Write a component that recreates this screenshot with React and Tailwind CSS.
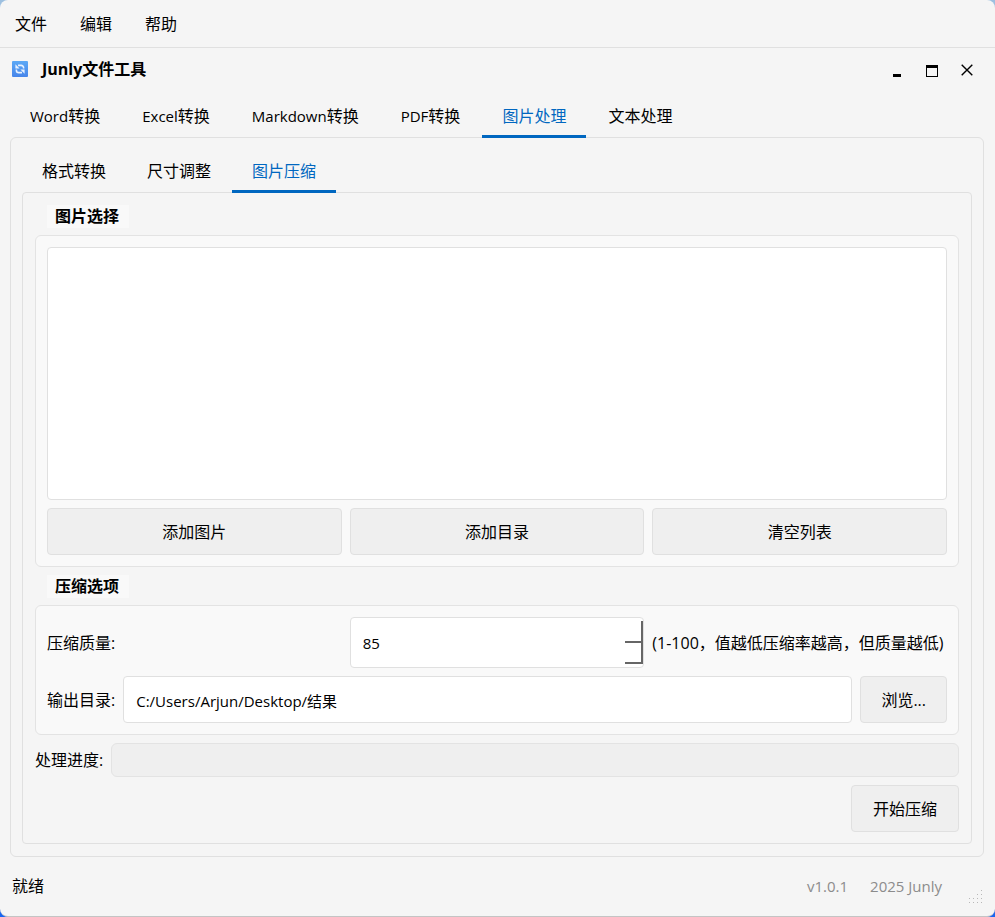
import { useState } from "react";

const mainTabs = [
  { latin: "Word", label: "转换" },
  { latin: "Excel", label: "转换" },
  { latin: "Markdown", label: "转换" },
  { latin: "PDF", label: "转换" },
  { latin: "", label: "图片处理" },
  { latin: "", label: "文本处理" },
];

const imageTabs = [
  { latin: "", label: "格式转换" },
  { latin: "", label: "尺寸调整" },
  { latin: "", label: "图片压缩" },
];

function TabBar({ tabs, active, onSelect, name, gap }) {
  return (
    <div role="tablist" aria-label={name} className={"relative z-10 -mb-px flex " + gap}>
      {tabs.map((tab, index) => (
        <button
          key={tab.latin + tab.label}
          type="button"
          role="tab"
          aria-selected={index === active}
          onClick={() => onSelect(index)}
          className={
            index === active
              ? "h-11 border-b-3 border-[#0067c0] px-5 pt-0.5 text-[#0067c0]"
              : "h-11 border-b-3 border-transparent px-5 pt-0.5"
          }
        >
          {tab.latin && <span className="text-[15px]">{tab.latin}</span>}
          {tab.label}
        </button>
      ))}
    </div>
  );
}

function PushButton({ children, className }) {
  return (
    <button type="button" className={"h-[47px] rounded border border-[#e0e0e0] bg-[#efefef] " + className}>
      {children}
    </button>
  );
}

function Group({ title, grow, children }) {
  return (
    <section className={grow ? "flex grow flex-col items-stretch" : "flex flex-col items-stretch"}>
      <h2 className="ml-3 self-start bg-[#f9f9f9] pr-2.5 pl-2 leading-[23px] font-bold">{title}</h2>
      <div className="mt-[7px] flex grow flex-col gap-2 rounded-md border border-[#e3e3e3] bg-[#f9f9f9] p-[11px]">
        {children}
      </div>
    </section>
  );
}

function AppIcon() {
  return (
    <svg width="16" height="16" viewBox="0 0 16 16" aria-hidden="true">
      <defs>
        <linearGradient id="icon-fill" x1="0" y1="0" x2="0" y2="1">
          <stop offset="0" stopColor="#5ca9f6" />
          <stop offset="1" stopColor="#4685ea" />
        </linearGradient>
      </defs>
      <rect width="16" height="16" rx="1" fill="url(#icon-fill)" />
      <g fill="none" stroke="#e6f1ff" strokeWidth="1.6">
        <path d="M6 4.4h3.2a2.4 2.4 0 0 1 2.4 2.4v.8" />
        <path d="M10 11.6H6.8a2.4 2.4 0 0 1-2.4-2.4v-.8" />
      </g>
      <path d="M3.4 3.2v4.2h4.2zM12.6 12.8V8.6H8.4z" fill="#e6f1ff" />
    </svg>
  );
}

const gripDots = [
  [12, 0], [8, 4], [12, 4], [4, 8], [8, 8], [12, 8], [0, 8], [0, 12], [4, 12], [8, 12], [12, 12],
];

export default function App() {
  const [mainTab, setMainTab] = useState(4);
  const [imageTab, setImageTab] = useState(2);
  const [quality, setQuality] = useState(85);
  const [folder, setFolder] = useState("C:/Users/Arjun/Desktop/结果");

  return (
    <div className="min-h-screen bg-linear-to-b from-[#9dc0e0] to-[#1a66f0]">
      <div className="flex min-h-screen flex-col rounded-lg border-b border-[#c4c4c4] bg-[#f5f5f5] font-['Open_Sans','Noto_Sans_CJK_SC',sans-serif] text-base leading-6 text-black">
        <nav className="flex h-12 items-center gap-[3px] border-b border-[#e0e0e0]">
          <button type="button" className="px-[15px]">文件</button>
          <button type="button" className="px-[15px]">编辑</button>
          <button type="button" className="px-[15px]">帮助</button>
        </nav>

        <header className="mb-1 flex h-[42px] items-center pr-[11px] pl-3">
          <AppIcon />
          <h1 className="ml-3.5 grow font-bold">Junly文件工具</h1>
          <button type="button" aria-label="最小化" className="flex h-8 w-[35px] items-center justify-center">
            <svg width="12" height="18" viewBox="0 -4 12 18"><path d="M2 10h8v3H2z" /></svg>
          </button>
          <button type="button" aria-label="最大化" className="flex h-8 w-[35px] items-center justify-center">
            <svg width="12" height="18" viewBox="0 -4 12 18"><path fillRule="evenodd" d="M0 1h12v12H0zM1 4v8h10V4z" /></svg>
          </button>
          <button type="button" aria-label="关闭" className="flex h-8 w-[35px] items-center justify-center">
            <svg width="12" height="18" viewBox="0 -4 12 18" fill="none" stroke="#000" strokeWidth="1.4"><path d="M.7.7l10.6 10.6M11.3.7L.7 11.3" /></svg>
          </button>
        </header>

        <main className="mr-[11px] ml-[10px] flex grow flex-col">
          <TabBar tabs={mainTabs} active={mainTab} onSelect={setMainTab} name="工具" gap="gap-0.5" />
          <div className="flex grow flex-col rounded-md border border-[#e0e0e0] p-[11px] pb-3">
            <TabBar tabs={imageTabs} active={imageTab} onSelect={setImageTab} name="图片处理" gap="gap-px" />
            <div className="flex grow flex-col gap-2 rounded border border-[#e0e0e0] px-3 pt-3 pb-[11px]">
              <Group title="图片选择" grow>
                <ul aria-label="图片列表" className="min-h-40 grow rounded border border-[#e0e0e0] bg-white" />
                <div className="grid grid-cols-3 gap-2">
                  <PushButton className="px-5">添加图片</PushButton>
                  <PushButton className="px-5">添加目录</PushButton>
                  <PushButton className="px-5">清空列表</PushButton>
                </div>
              </Group>

              <Group title="压缩选项">
                <div className="grid grid-cols-3 items-center gap-2">
                  <label htmlFor="quality">压缩质量:</label>
                  <div className="flex h-[51px] items-center rounded border border-[#e0e0e0] bg-white">
                    <input
                      id="quality"
                      inputMode="numeric"
                      value={quality}
                      onChange={(event) => setQuality(Number(event.target.value) || 0)}
                      className="h-full min-w-0 grow px-3 text-[15px] outline-none"
                    />
                    <div className="flex h-[43px] w-[18px] flex-col">
                      <button
                        type="button"
                        aria-label="增加"
                        onClick={() => setQuality(Math.min(100, quality + 1))}
                        className="grow border-r-2 border-b-2 border-[#666666]"
                      />
                      <button
                        type="button"
                        aria-label="减少"
                        onClick={() => setQuality(Math.max(1, quality - 1))}
                        className="grow border-r-2 border-b-2 border-[#666666]"
                      />
                    </div>
                  </div>
                  <span className="whitespace-nowrap">(1-100，值越低压缩率越高，但质量越低)</span>
                </div>
                <div className="flex items-center gap-2">
                  <label htmlFor="folder">输出目录:</label>
                  <input
                    id="folder"
                    value={folder}
                    onChange={(event) => setFolder(event.target.value)}
                    className="h-[47px] min-w-0 grow rounded border border-[#e0e0e0] bg-white px-3 pt-0.5 text-[15px] outline-none"
                  />
                  <PushButton className="px-5">浏览...</PushButton>
                </div>
              </Group>

              <div className="flex items-center gap-2">
                <span id="progress-label">处理进度:</span>
                <div
                  role="progressbar"
                  aria-labelledby="progress-label"
                  aria-valuenow={0}
                  className="h-[34px] grow rounded-md border border-[#e3e3e3] bg-[#efefef]"
                />
              </div>

              <PushButton className="self-end px-[21px]">开始压缩</PushButton>
            </div>
          </div>
        </main>

        <footer className="flex h-[59px] items-center pr-3 pb-0.5 pl-3">
          <span className="grow">就绪</span>
          <span className="text-[15px] text-[#8c8c8c]">v1.0.1</span>
          <span className="ml-[22px] text-[15px] text-[#8c8c8c]">2025 Junly</span>
          <svg width="14" height="14" viewBox="0 0 14 14" className="mb-2.5 ml-[27px] self-end" fill="#b8b8b8" aria-hidden="true">
            {gripDots.map(([x, y]) => (
              <rect key={x + "-" + y} x={x} y={y} width="1" height="1" />
            ))}
          </svg>
        </footer>
      </div>
    </div>
  );
}
